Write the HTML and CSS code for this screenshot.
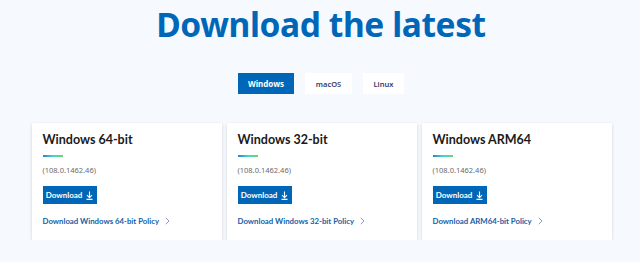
FILE: index.html
```html
<!DOCTYPE html>
<html>
<head>
  <title>Download the latest</title>
  <link rel="stylesheet" href="styles.css">
</head>
<body>
  <div class="page">
    <h1>Download the latest</h1>

    <div class="tabs">
      <button class="tab active">Windows</button>
      <button class="tab">macOS</button>
      <button class="tab">Linux</button>
    </div>

    <div class="cards">
      <div class="card">
        <h2>Windows 64-bit</h2>
        <div class="accent"></div>
        <p class="version">(108.0.1462.46)</p>
        <button class="download">Download
          <svg width="7" height="9" viewBox="0 0 7 9"><path d="M3.5 0.5V6.5M1 4.2L3.5 6.7L6 4.2M0.5 8.4H6.5" fill="none" stroke="#fff" stroke-width="1.1"/></svg>
        </button>
        <a class="policy" href="#">Download Windows 64-bit Policy
          <svg width="5" height="8" viewBox="0 0 5 8"><path d="M0.8 0.8L4 4L0.8 7.2" fill="none" stroke="#8a9bb5" stroke-width="1"/></svg>
        </a>
      </div>
      <div class="card">
        <h2>Windows 32-bit</h2>
        <div class="accent"></div>
        <p class="version">(108.0.1462.46)</p>
        <button class="download">Download
          <svg width="7" height="9" viewBox="0 0 7 9"><path d="M3.5 0.5V6.5M1 4.2L3.5 6.7L6 4.2M0.5 8.4H6.5" fill="none" stroke="#fff" stroke-width="1.1"/></svg>
        </button>
        <a class="policy" href="#">Download Windows 32-bit Policy
          <svg width="5" height="8" viewBox="0 0 5 8"><path d="M0.8 0.8L4 4L0.8 7.2" fill="none" stroke="#8a9bb5" stroke-width="1"/></svg>
        </a>
      </div>
      <div class="card">
        <h2>Windows ARM64</h2>
        <div class="accent"></div>
        <p class="version">(108.0.1462.46)</p>
        <button class="download">Download
          <svg width="7" height="9" viewBox="0 0 7 9"><path d="M3.5 0.5V6.5M1 4.2L3.5 6.7L6 4.2M0.5 8.4H6.5" fill="none" stroke="#fff" stroke-width="1.1"/></svg>
        </button>
        <a class="policy" href="#">Download ARM64-bit Policy
          <svg width="5" height="8" viewBox="0 0 5 8"><path d="M0.8 0.8L4 4L0.8 7.2" fill="none" stroke="#8a9bb5" stroke-width="1"/></svg>
        </a>
      </div>
    </div>
  </div>
</body>
</html>
```

FILE: styles.css
```css
:root {
  --blue: #0067b8;
  --background: #f6fafe;
  --text: #1a1a1a;
  --muted: #6b6b6b;
  --link: #1560a8;
}

* {
  margin: 0;
  padding: 0;
  box-sizing: border-box;
}

body {
  font-family: 'Noto Sans', 'Open Sans', sans-serif;
  background: var(--background);
  color: var(--text);
}

.page {
  width: 640px;
  padding-top: 3px;
  display: flex;
  flex-direction: column;
  align-items: center;
}

h1 {
  font-size: 33.5px;
  font-weight: 700;
  line-height: 42px;
  color: var(--blue);
  letter-spacing: -0.4px;
  margin-left: 2px;
}

.tabs {
  display: flex;
  gap: 11px;
  margin-top: 28px;
  margin-left: 2px;
}

.tab {
  height: 21px;
  border: none;
  background: #fff;
  color: #35406b;
  font-family: inherit;
  font-size: 7.5px;
  font-weight: 600;
  padding: 0;
}

.tab:first-child {
  width: 56px;
}

.tab:nth-child(2) {
  width: 47px;
}

.tab:nth-child(3) {
  width: 41px;
}

.tab.active {
  background: var(--blue);
  color: #fff;
  font-weight: 700;
  font-size: 8px;
}

.cards {
  display: grid;
  grid-template-columns: repeat(3, 190px);
  gap: 5px;
  margin-top: 29px;
  margin-left: 3px;
}

.card {
  background: #fff;
  padding: 7px 11px 13px;
  box-shadow: 0 1px 3px rgba(0, 0, 0, 0.16);
  display: flex;
  flex-direction: column;
  align-items: flex-start;
}

.card h2 {
  font-family: 'Lato', sans-serif;
  font-size: 12.5px;
  font-weight: 700;
  line-height: 20px;
}

.accent {
  width: 20px;
  height: 2px;
  margin-top: 5px;
  background: linear-gradient(90deg, #2b7fd8, #3fd9c8, #6fd46a);
}

.version {
  font-size: 7.5px;
  line-height: 12px;
  color: var(--muted);
  margin-top: 7px;
}

.download {
  margin-top: 10px;
  height: 18px;
  width: 54px;
  border: none;
  background: var(--blue);
  color: #fff;
  font-family: 'Lato', sans-serif;
  font-size: 8px;
  font-weight: 700;
  display: flex;
  align-items: center;
  justify-content: center;
  gap: 4px;
}

.policy {
  margin-top: 11px;
  font-family: 'Lato', sans-serif;
  font-size: 7.8px;
  line-height: 12px;
  font-weight: 700;
  color: var(--link);
  text-decoration: none;
  display: flex;
  align-items: center;
  gap: 6px;
}
```
